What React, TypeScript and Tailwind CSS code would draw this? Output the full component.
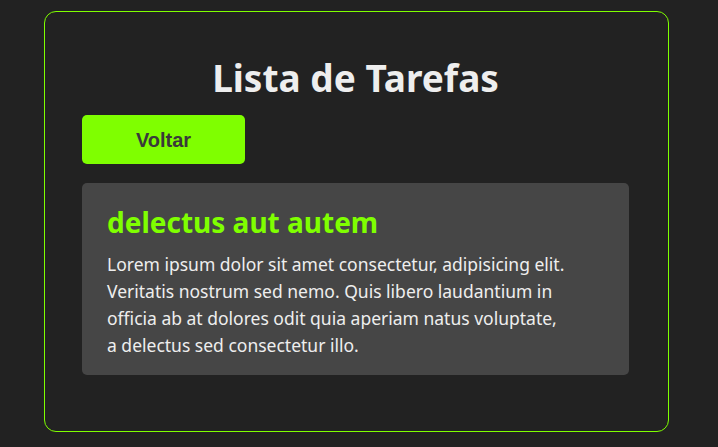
export default function App() {
  return (
    <div className="min-h-screen w-full bg-[#222222] pt-[11px] font-['Noto_Sans',sans-serif]">
      <div className="ml-[44px] w-[625px] h-[421px] rounded-[12px] border border-[#7fff00] pl-[37px] pr-[39px] pt-[37px]">
        <h1 className="text-center text-[37px] leading-[58px] font-bold text-[#eeeeee]">Lista de Tarefas</h1>
        <button className="mt-[8px] h-[49px] w-[163px] rounded-[5px] bg-[#7fff00] font-['Liberation_Sans',sans-serif] text-[20px] font-bold text-[#3a3a3a]">
          Voltar
        </button>
        <div className="mt-[19px] rounded-[5px] bg-[#464646] px-[25px] pt-[20px] pb-[16px]">
          <h2 className="text-[28px] leading-[38px] font-bold text-[#7fff00]">delectus aut autem</h2>
          <p className="mt-[10px] text-[17.5px] leading-[27px] text-[#eeeeee] whitespace-nowrap">
            Lorem ipsum dolor sit amet consectetur, adipisicing elit.<br />
            Veritatis nostrum sed nemo. Quis libero laudantium in<br />
            officia ab at dolores odit quia aperiam natus voluptate,<br />
            a delectus sed consectetur illo.
          </p>
        </div>
      </div>
    </div>
  )
}
